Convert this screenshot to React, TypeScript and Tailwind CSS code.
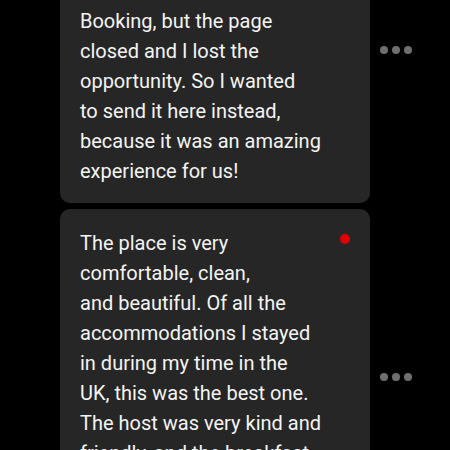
const first = [
  "I wanted to leave this",
  "review for the hotel",
  "on the site of the hotel at",
  "Booking, but the page",
  "closed and I lost the",
  "opportunity. So I wanted",
  "to send it here instead,",
  "because it was an amazing",
  "experience for us!",
];

const second = [
  "The place is very",
  "comfortable, clean,",
  "and beautiful. Of all the",
  "accommodations I stayed",
  "in during my time in the",
  "UK, this was the best one.",
  "The host was very kind and",
  "friendly, and the breakfast",
  "was delicious every single",
  "morning. Thank you!",
];

function Dots() {
  return (
    <div className="flex items-center gap-[4px] ml-[10px]">
      <span className="size-[8px] rounded-full bg-[#6e6e6e]" />
      <span className="size-[8px] rounded-full bg-[#6e6e6e]" />
      <span className="size-[8px] rounded-full bg-[#6e6e6e]" />
    </div>
  );
}

function Bubble({ lines, unread }: { lines: string[]; unread?: boolean }) {
  return (
    <div className="flex items-center">
      <div className="relative ml-[60px] w-[310px] rounded-[10px] bg-[#262626] pl-[20px] pr-[16px] pt-[19px] pb-[17px]">
        {unread && (
          <span className="absolute right-[20px] top-[25px] size-[10px] rounded-full bg-[#e00000]" />
        )}
        {lines.map((l) => (
          <div key={l} className="text-[20px] leading-[30px] text-[#f4f4f4] whitespace-nowrap">
            {l}
          </div>
        ))}
      </div>
      <Dots />
    </div>
  );
}

export default function App() {
  return (
    <div
      className="w-[450px] h-[450px] overflow-hidden bg-black"
      style={{ fontFamily: "Roboto, 'Noto Sans', sans-serif" }}
    >
      <div className="flex flex-col gap-[6px] -mt-[103px]">
        <Bubble lines={first} />
        <Bubble lines={second} unread />
      </div>
    </div>
  );
}
